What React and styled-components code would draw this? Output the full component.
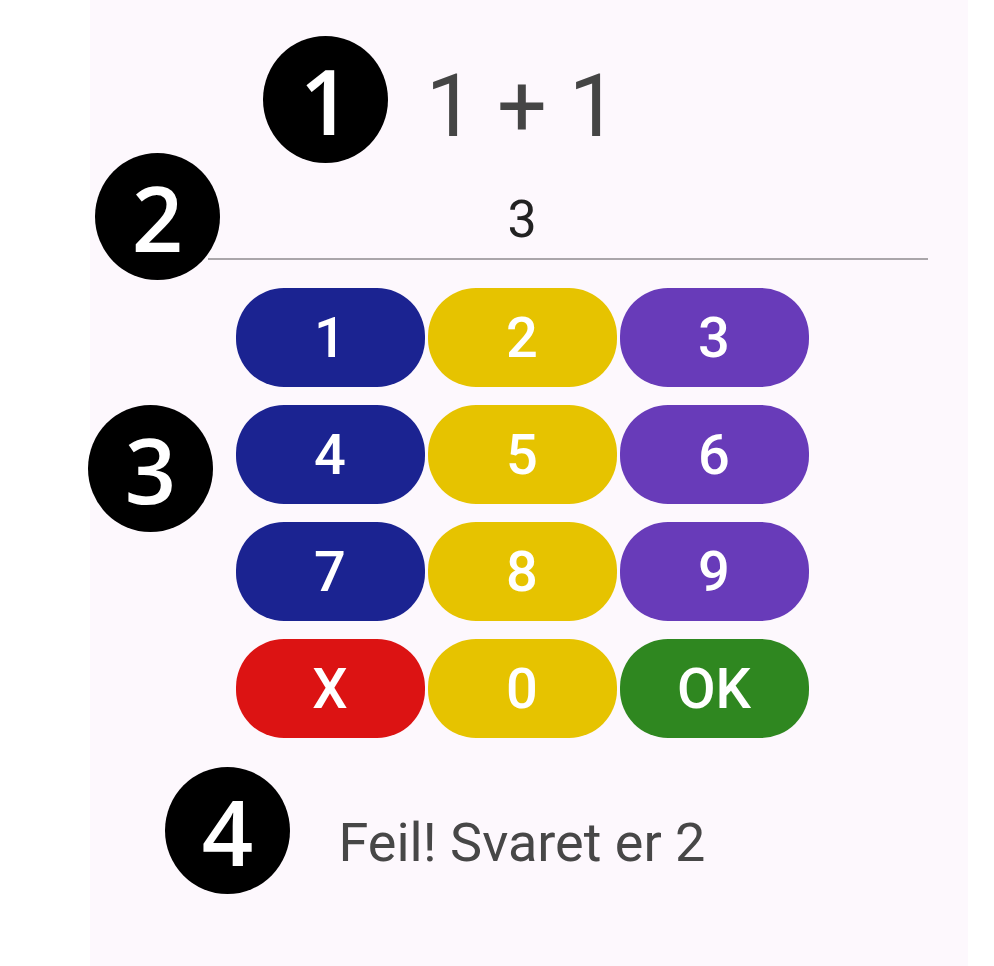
import React from 'react'
import styled, { createGlobalStyle } from 'styled-components'

const GlobalStyle = createGlobalStyle`
  html, body {
    margin: 0;
    padding: 0;
    background: #ffffff;
  }
  * {
    box-sizing: border-box;
  }
`

const keys = [
  { label: '1', tone: 'blue' },
  { label: '2', tone: 'yellow' },
  { label: '3', tone: 'purple' },
  { label: '4', tone: 'blue' },
  { label: '5', tone: 'yellow' },
  { label: '6', tone: 'purple' },
  { label: '7', tone: 'blue' },
  { label: '8', tone: 'yellow' },
  { label: '9', tone: 'purple' },
  { label: 'X', tone: 'red' },
  { label: '0', tone: 'yellow' },
  { label: 'OK', tone: 'green' },
]

const tones = {
  blue: '#1b2391',
  yellow: '#e6c300',
  purple: '#683bb9',
  red: '#dc1313',
  green: '#2f8720',
}

// numbered markers drawn over the screenshot
const markers = [
  { n: 1, x: 173, y: 36 },
  { n: 2, x: 5, y: 153 },
  { n: 3, x: -2, y: 405 },
  { n: 4, x: 75, y: 767 },
]

function App() {
  return (
    <Page>
      <GlobalStyle />
      <Panel>
        <Content>
          <Equation>1 + 1</Equation>
          <Answer type="text" defaultValue="3" readOnly />
          <Keypad>
            {keys.map((k) => (
              <Key key={k.label} tone={k.tone}>
                {k.label}
              </Key>
            ))}
          </Keypad>
          <Feedback>Feil! Svaret er 2</Feedback>
        </Content>

        {markers.map((m) => (
          <Marker key={m.n} style={{ left: m.x, top: m.y }}>
            {m.n}
          </Marker>
        ))}
      </Panel>
    </Page>
  )
}

export default App

const Page = styled.div`
  width: 994px;
  height: 966px;
  display: flex;
  background: #ffffff;
  overflow: hidden;
`

const Panel = styled.div`
  position: relative;
  margin-left: 90px;
  width: 878px;
  height: 966px;
  background: #fdf8fd;
`

const Content = styled.div`
  margin-left: 132px;
  width: 600px;
  padding-top: 62px;
  display: flex;
  flex-direction: column;
  align-items: center;
  font-family: Roboto, 'Liberation Sans', sans-serif;
`

const Equation = styled.div`
  font-size: 88px;
  line-height: 1;
  color: #454545;
  height: 88px;
`

const Answer = styled.input`
  align-self: flex-start;
  margin: 43px 0 0 -14px;
  width: 720px;
  height: 67px;
  padding: 0 92px 13px 0;
  border: none;
  border-bottom: 2px solid #aaa6aa;
  background: transparent;
  outline: none;
  font-family: Roboto, 'Liberation Sans', sans-serif;
  font-size: 52px;
  line-height: 52px;
  color: #222222;
  text-align: center;
`

const Keypad = styled.div`
  margin-top: 28px;
  display: grid;
  grid-template-columns: repeat(3, 189px);
  grid-auto-rows: 99px;
  column-gap: 3px;
  row-gap: 18px;
`

const Key = styled.button`
  border: none;
  border-radius: 48px;
  background: ${(p) => tones[p.tone]};
  color: #ffffff;
  font-family: Roboto, 'Liberation Sans', sans-serif;
  font-size: 56px;
  font-weight: 500;
  display: flex;
  align-items: center;
  justify-content: center;
  padding: 0;
  cursor: pointer;
`

const Feedback = styled.div`
  margin-top: 78px;
  font-size: 54px;
  line-height: 1;
  color: #474747;
`

const Marker = styled.div`
  position: absolute;
  width: 125px;
  height: 127px;
  border-radius: 50%;
  background: #000000;
  color: #ffffff;
  display: flex;
  align-items: center;
  justify-content: center;
  font-family: 'Open Sans', 'DejaVu Sans', sans-serif;
  font-weight: 600;
  font-size: 90px;
  line-height: 1;
`
